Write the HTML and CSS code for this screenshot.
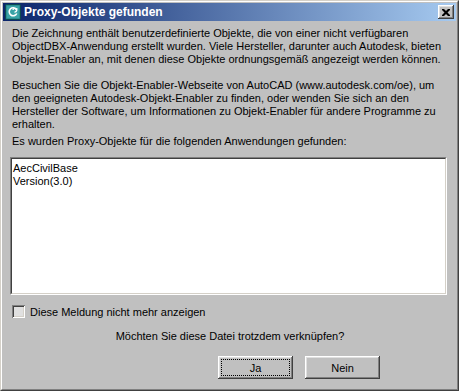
FILE: index.html
```html
<!DOCTYPE html>
<html lang="de">
<head>
    <meta charset="UTF-8">
    <title>Proxy-Objekte gefunden</title>
    <link rel="stylesheet" href="styles.css">
</head>
<body>
    <div class="fenster">
        <div class="rahmen">
            <div class="titelleiste">
                <svg class="symbol" width="16" height="16" viewBox="0 0 16 16">
                    <rect x="0.5" y="0.5" width="15" height="15" rx="1" fill="#1d7a80" stroke="#0c4a50"/>
                    <rect x="1.5" y="1.5" width="13" height="13" fill="#3aa3a6"/>
                    <path d="M11.5 5.5 A4 4 0 1 0 11.8 9.5" fill="none" stroke="#fff" stroke-width="1.6"/>
                    <path d="M9.5 8 A1.8 1.8 0 1 0 8 6" fill="none" stroke="#fff" stroke-width="1.4"/>
                    <path d="M10.2 4.2 L12.6 4.2 L12.2 6.8 Z" fill="#fff"/>
                </svg>
                <span class="titel">Proxy-Objekte gefunden</span>
                <button class="schliessen" type="button">
                    <svg width="8" height="7" viewBox="0 0 8 7">
                        <path d="M0 0h2l2 2 2-2h2v1L5.5 3.5 8 6v1H6L4 5 2 7H0V6l2.5-2.5L0 1z" fill="#000"/>
                    </svg>
                </button>
            </div>
            <div class="inhalt">
                <p class="absatz">Die Zeichnung enthält benutzerdefinierte Objekte, die von einer nicht verfügbaren<br>ObjectDBX-Anwendung erstellt wurden. Viele Hersteller, darunter auch Autodesk, bieten<br>Objekt-Enabler an, mit denen diese Objekte ordnungsgemäß angezeigt werden können.</p>
                <p class="absatz">Besuchen Sie die Objekt-Enabler-Webseite von AutoCAD (www.autodesk.com/oe), um<br>den geeigneten Autodesk-Objekt-Enabler zu finden, oder wenden Sie sich an den<br>Hersteller der Software, um Informationen zu Objekt-Enabler für andere Programme zu<br>erhalten.</p>
                <p class="hinweis">Es wurden Proxy-Objekte für die folgenden Anwendungen gefunden:</p>
                <div class="liste">
                    <div class="listeInnen">AecCivilBase<br>Version(3.0)</div>
                </div>
                <label class="option">
                    <span class="kasten"></span>
                    Diese Meldung nicht mehr anzeigen
                </label>
                <p class="frage">Möchten Sie diese Datei trotzdem verknüpfen?</p>
                <div class="knoepfe">
                    <button class="knopf aktiv" type="button"><span>Ja</span></button>
                    <button class="knopf" type="button"><span>Nein</span></button>
                </div>
            </div>
        </div>
    </div>
</body>
</html>
```

FILE: styles.css
```css
body {
    margin: 0;
    padding: 0;
    background-color: #c0c0c0;
    font-family: "Liberation Sans", Arial, sans-serif;
    font-size: 11px;
    color: #000;
}

.fenster {
    width: 459px;
    height: 391px;
    box-sizing: border-box;
    border: 1px solid;
    border-color: #d4d0c8 #404040 #404040 #d4d0c8;
}

.rahmen {
    height: 100%;
    box-sizing: border-box;
    border: 1px solid;
    border-color: #fff #808080 #808080 #fff;
    padding: 1px;
    display: flex;
    flex-direction: column;
}

.titelleiste {
    height: 18px;
    display: flex;
    align-items: center;
    padding: 0 2px 0 2px;
    background: linear-gradient(to right, #0a246a, #a6caf0);
    color: #fff;
}

.symbol {
    flex: none;
    margin-right: 3px;
}

.titel {
    font-weight: bold;
    font-size: 12px;
    flex: 1;
}

.schliessen {
    width: 16px;
    height: 14px;
    padding: 0;
    margin: 0;
    background: #c0c0c0;
    border: none;
    box-shadow: inset -1px -1px #404040, inset 1px 1px #fff, inset -2px -2px #808080, inset 2px 2px #dfdfdf;
    display: flex;
    align-items: center;
    justify-content: center;
}

.inhalt {
    flex: 1;
    padding: 6px 8px 0 9px;
    display: flex;
    flex-direction: column;
}

.absatz {
    margin: 0 0 13px 0;
    line-height: 13px;
}

.hinweis {
    margin: -9px 0 0 0;
    line-height: 13px;
}

.liste {
    margin-top: 9px;
    height: 138px;
    box-sizing: border-box;
    border: 1px solid;
    border-color: #808080 #fff #fff #808080;
    margin-left: -2px;
    margin-right: 1px;
}

.listeInnen {
    height: 100%;
    box-sizing: border-box;
    border: 1px solid;
    border-color: #404040 #d4d0c8 #d4d0c8 #404040;
    background: #fff;
    padding: 3px 1px;
    line-height: 13px;
}

.option {
    display: flex;
    align-items: center;
    margin-top: 10px;
    height: 13px;
}

.kasten {
    width: 13px;
    height: 13px;
    box-sizing: border-box;
    margin-right: 5px;
    margin-left: 0;
    background: #e0e0e0;
    box-shadow: inset 1px 1px #808080, inset -1px -1px #fff, inset 2px 2px #404040, inset -2px -2px #d4d0c8;
}

.frage {
    margin: 12px 0 0 0;
    text-align: center;
    line-height: 13px;
}

.knoepfe {
    display: flex;
    justify-content: flex-end;
    gap: 12px;
    margin-top: 13px;
    padding-right: 68px;
}

.knopf {
    width: 75px;
    height: 23px;
    padding: 3px;
    background: #c0c0c0;
    border: none;
    font-family: "Liberation Sans", Arial, sans-serif;
    font-size: 11px;
    box-shadow: inset -1px -1px #404040, inset 1px 1px #fff, inset -2px -2px #808080, inset 2px 2px #dfdfdf;
}

.knopf span {
    display: flex;
    height: 100%;
    align-items: center;
    justify-content: center;
    box-sizing: border-box;
    border: 1px dotted transparent;
}

.aktiv span {
    border-color: #000;
}
```
